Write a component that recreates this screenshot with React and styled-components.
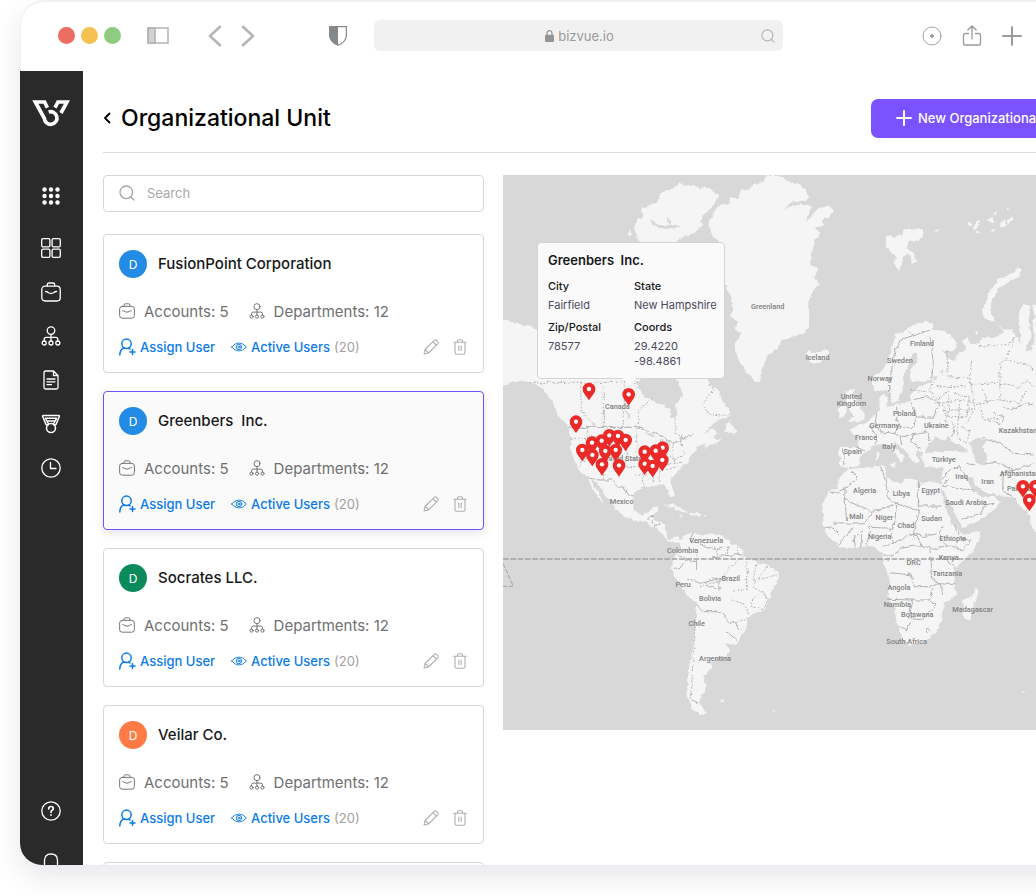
import React from 'react';
import styled, { createGlobalStyle } from 'styled-components';

const GlobalStyle = createGlobalStyle`
  * {
    box-sizing: border-box;
  }

  body {
    margin: 0;
    background: #ffffff;
    color: #17181a;
    font-family: Inter, 'Liberation Sans', sans-serif;
    overflow: hidden;
  }

  button {
    border: 0;
    padding: 0;
    background: none;
    color: inherit;
    font: inherit;
    cursor: pointer;
  }

  svg {
    display: block;
    flex: none;
  }
`;

// Styled Components
// The window runs past the right side of the page
const Window = styled.div`
  display: flex;
  flex-direction: column;
  height: calc(100vh - 31px);
  margin: 0 -88px 31px 20px;
  background: #ffffff;
  border-radius: 24px 0 0 22px;
  box-shadow: 0 12px 28px rgba(30, 30, 60, 0.1);
`;

const Toolbar = styled.div`
  display: flex;
  align-items: center;
  flex: none;
  height: 71px;
  padding: 0 0 2px 37px;
  border: solid #f1f1f1;
  border-width: 2px 0 0 1px;
  border-radius: 24px 0 0 0;
  color: #b5b5b5;
`;

const Dots = styled.div`
  display: flex;
  gap: 6px;
  margin-right: 26px;
`;

const Dot = styled.span`
  width: 17px;
  height: 17px;
  border-radius: 50%;
  background: ${({ $color }) => $color};
`;

const Arrows = styled.div`
  display: flex;
  gap: 19px;
  margin: 0 74px 0 39px;
`;

const AddressBar = styled.div`
  display: flex;
  align-items: center;
  flex: 0 1 409px;
  height: 31px;
  margin-left: 27px;
  padding: 0 8px;
  border-radius: 6px;
  background: #f1f1f1;
`;

const Address = styled.span`
  display: flex;
  align-items: center;
  justify-content: center;
  flex: 1;
  gap: 4px;
  padding-left: 16px;
  color: #9a9a9a;
  font-size: 13px;
`;

const ToolbarActions = styled.div`
  display: flex;
  align-items: center;
  gap: 20px;
  margin-left: 139px;
  color: #9b9b9b;
`;

const Body = styled.div`
  display: flex;
  flex: 1;
  min-height: 0;
  overflow: hidden;
  border-radius: 0 0 0 22px;
`;

const Sidebar = styled.nav`
  display: flex;
  flex-direction: column;
  align-items: center;
  flex: none;
  width: 63px;
  padding: 28px 2px 0 0;
  background: #2a2a2a;
  color: #ffffff;
`;

const SideButton = styled.button`
  display: flex;
  align-items: center;
  justify-content: center;
  flex: none;
  width: 44px;
  height: 44px;
`;

const NavGroup = styled.div`
  margin-top: 47px;

  button:first-child {
    margin-bottom: 8px;
  }
`;

const BottomGroup = styled(NavGroup)`
  margin-top: auto;
  margin-bottom: -20px;
`;

const Main = styled.main`
  flex: 1;
  min-width: 0;
  padding: 28px 20px 0;
`;

const Header = styled.header`
  display: flex;
  align-items: center;
  justify-content: space-between;
  padding-bottom: 14px;
  border-bottom: 1px solid #dcdcdc;
`;

const Heading = styled.div`
  display: flex;
  align-items: center;
  gap: 10px;
  padding-bottom: 2px;
  color: #000000;

  h1 {
    margin: 0;
    font-size: 23px;
    font-weight: 500;
    line-height: 28px;
  }
`;

const PrimaryButton = styled.button`
  display: flex;
  align-items: center;
  gap: 6px;
  height: 39px;
  padding: 0 36px 1px 25px;
  border-radius: 7px;
  background: #7a52ff;
  color: #ffffff;
  font-size: 13px;
  font-weight: 500;
  white-space: nowrap;
`;

const Content = styled.div`
  display: flex;
  align-items: flex-start;
  gap: 19px;
  padding-top: 22px;
`;

const List = styled.section`
  display: flex;
  flex-direction: column;
  flex: none;
  gap: 18px;
  width: 381px;
`;

const SearchBox = styled.label`
  display: flex;
  align-items: center;
  gap: 12px;
  height: 37px;
  margin-bottom: 4px;
  padding: 0 15px 1px;
  border: 1px solid #d6d6d6;
  border-radius: 4px;
  color: #a3a3a3;

  input {
    flex: 1;
    min-width: 0;
    padding: 0;
    border: 0;
    outline: 0;
    background: none;
    font: 13px Inter, 'Liberation Sans', sans-serif;
  }

  input::placeholder {
    color: #a8a8a8;
  }
`;

const Card = styled.article`
  padding: 15px;
  border: 1px solid ${({ $active }) => ($active ? '#6f52f0' : '#d6d6d6')};
  border-radius: 4px;
  background: ${({ $active }) => ($active ? '#fafafa' : '#ffffff')};
  box-shadow: ${({ $active }) => ($active ? '0 3px 10px rgba(90, 90, 130, 0.16)' : 'none')};
`;

const CardTitle = styled.div`
  display: flex;
  align-items: center;
  gap: 11px;
  margin-bottom: 23px;

  h2 {
    margin: 0;
    font-size: 15px;
    font-weight: 500;
    line-height: 18px;
    white-space: pre;
  }
`;

const Avatar = styled.span`
  display: flex;
  align-items: center;
  justify-content: center;
  width: 28px;
  height: 28px;
  border-radius: 50%;
  background: ${({ $color }) => $color};
  color: #ffffff;
  font-size: 12px;
`;

const Stats = styled.div`
  display: flex;
  align-items: center;
  gap: 20px;
  height: 20px;
  margin-bottom: 16px;
  color: #707070;
  font-size: 15px;
`;

const Stat = styled.span`
  display: flex;
  align-items: center;
  gap: 9px;
`;

const Actions = styled.div`
  display: flex;
  align-items: center;
  height: 20px;
  gap: 16px;
  font-size: 13px;
`;

const ActionLink = styled.a`
  display: flex;
  align-items: center;
  gap: 4px;
  color: #0a7be6;
  font-weight: 500;
  text-decoration: none;

  span {
    color: #a0a0a0;
    font-weight: 400;
  }
`;

const CardTools = styled.div`
  display: flex;
  gap: 14px;
  margin-left: auto;
  padding-right: 1px;
  color: #b0b0b0;
`;

const MapPanel = styled.section`
  position: relative;
  flex: 1;
  min-width: 0;
  overflow: hidden;
  background: #d8d8d8;
`;

const MapLabel = styled.text`
  fill: #808080;
  font-family: Roboto, sans-serif;
  font-size: 22px;
  font-weight: 500;
`;

const MapTooltip = styled.div`
  position: absolute;
  top: 67px;
  left: 34px;
  width: 188px;
  padding: 9px 0 9px 10px;
  border: 1px solid #d4d4d4;
  border-radius: 4px;
  background: #fafafa;

  h3 {
    margin: 0 0 9px;
    font-size: 13px;
    font-weight: 600;
    line-height: 16px;
    white-space: pre;
  }

  &::after {
    content: '';
    position: absolute;
    bottom: -5px;
    left: 86px;
    width: 10px;
    height: 10px;
    background: #fafafa;
    transform: rotate(45deg);
  }
`;

const Details = styled.dl`
  display: grid;
  grid-template-columns: 86px 1fr;
  row-gap: 5px;
  margin: 0;
  font-size: 11px;
  white-space: nowrap;

  dt {
    margin-bottom: 3px;
    font-weight: 500;
    line-height: 18px;
  }

  dd {
    margin: 0;
    color: #4b4b5c;
    line-height: 15px;
  }
`;

const Icon = ({ w = 20, h = w, box, sw = 1.3, children }) => (
  <svg
    width={w}
    height={h}
    viewBox={box || `0 0 ${w} ${h}`}
    fill="none"
    stroke="currentColor"
    strokeWidth={sw}
    strokeLinecap="round"
    strokeLinejoin="round"
    aria-hidden="true"
  >
    {children}
  </svg>
);

const Logo = () => (
  <svg width="38" height="28" viewBox="97 298 114 84" fill="none" stroke="#ffffff" strokeWidth="11" aria-hidden="true">
    <path d="M143 324 135 307H107L134 356A19 19 0 1 0 147 337" />
    <path d="M166 324 175 307H202L184 340" />
  </svg>
);

const SearchIcon = ({ size = 16 }) => (
  <Icon w={size} box="0 0 16 16">
    <circle cx="7.3" cy="7.3" r="6.3" />
    <path d="m12 12 3 3" />
  </Icon>
);

const BriefcaseIcon = ({ size = 20, sw }) => (
  <Icon w={size} box="0 0 20 20" sw={sw}>
    <rect x="0.8" y="4.2" width="18.4" height="14.8" rx="3.2" />
    <path d="M6.3 4V2.6Q6.3 1 8 1h4q1.7 0 1.7 1.6V4M4.5 9.5q1.5 0 3 1.3 2.5 1.4 5 0 1.5-1.3 3-1.3" />
  </Icon>
);

const OrgIcon = ({ size = 20, sw }) => (
  <Icon w={size} box="0 0 20 20" sw={sw}>
    <circle cx="10" cy="4.6" r="3.8" />
    <path d="M10 8.4v7M3.2 15v-1.600q0-2 2-2h9.600q2 0 2 2V15" />
    <circle cx="3.2" cy="17" r="2" />
    <circle cx="10" cy="17" r="2" />
    <circle cx="16.8" cy="17" r="2" />
  </Icon>
);

const DotsIcon = () => (
  <svg width="20" height="20" viewBox="0 0 20 20" fill="currentColor" aria-hidden="true">
    {[3.5, 10, 16.5].map((y) => [3.5, 10, 16.5].map((x) => <circle key={`${x}-${y}`} cx={x} cy={y} r="2.2" />))}
  </svg>
);

const TilesIcon = () => (
  <Icon>
    <rect x="0.7" y="0.7" width="8.2" height="8.2" rx="1.3" />
    <rect x="11.1" y="0.7" width="8.2" height="8.2" rx="1.3" />
    <rect x="0.7" y="11.1" width="8.2" height="8.2" rx="1.3" />
    <rect x="11.1" y="11.1" width="8.2" height="8.2" rx="1.3" />
  </Icon>
);

const DocumentIcon = () => (
  <Icon>
    <path d="M12.5 1H4.500q-1.500 0-1.500 1.500v15q0 1.500 1.500 1.500h11q1.500 0 1.500-1.500V5.500L12.500 1v4.500H17M6 9h8M6 11.800h8M6 14.600h4.500" />
  </Icon>
);

const MedalIcon = () => (
  <Icon sw={1.5}>
    <path d="M2.3 1.500h15.400q1 0 .6 1L15 10.500 13 11M2.300 1.500q-1 0-.6 1L5 10.500l2 .5M4.500 4.300h11M4.500 4.300 7.500 10M15.500 4.300 12.500 10M7 7h6" />
    <circle cx="10" cy="14" r="4.5" />
  </Icon>
);

const ClockIcon = () => (
  <Icon>
    <circle cx="10" cy="10" r="9.2" />
    <path d="M9.5 4.500v6h5.500" />
  </Icon>
);

const HelpIcon = () => (
  <Icon>
    <circle cx="10" cy="10" r="9.2" />
    <path d="M7.7 7.800q0-2.300 2.300-2.300t2.300 2q0 1.200-1.200 1.800T10 11.300M10 13.800v.3" strokeWidth="1.7" />
  </Icon>
);

const BellIcon = () => (
  <Icon>
    <path d="M3.5 16V7.500q0-6.500 6.500-6.500t6.500 6.500V16zM8 18.500h4" />
  </Icon>
);

const AssignIcon = () => (
  <Icon w={17} h={18} sw={1.5}>
    <circle cx="7.5" cy="5.8" r="4.7" />
    <path d="M.8 17q.2-6 4.700-7.200M9.500 10.200l1.500.8M13.500 11.500v5M11 14h5" />
  </Icon>
);

const EyeIcon = () => (
  <Icon w={16} h={12} sw={0.9}>
    <path d="M.6 6Q4 2 8 2T15.400 6Q12 10 8 10T.6 6z" />
    <circle cx="8" cy="6" r="2.700" />
    <circle cx="8" cy="6" r="1" />
  </Icon>
);

const PencilIcon = () => (
  <Icon w={16} sw={1.1}>
    <path d="m1 15 1-4.500L11.300 1.300q1.200-1 2.500.3l.7.7q1.200 1.300.2 2.500L5.500 14 1 15zM10 2.800 13.300 6M2 10.500 5.500 14" />
  </Icon>
);

const TrashIcon = () => (
  <Icon w={14} h={16} sw={1.1}>
    <path d="M.7 3.200h12.600M2 3.400v10.300q0 1.500 1.500 1.500h7q1.500 0 1.500-1.500V3.400M4.500 3V2q0-1.200 1.200-1.200h2.600Q9.500.8 9.500 2v1M5.800 7v4.500M8.200 7v4.500" />
  </Icon>
);

const land = [
  // North America
  'M0 450 30 455 50 462 80 465 112 478 130 500 420 500 420 622 412 650 430 675 455 690 490 705 510 715 512 738 522 748 532 735 528 705 545 680 548 665 538 645 530 626 560 600 600 600 630 640 640 655 652 655 658 675 672 695 690 722 692 742 660 748 640 762 615 785 640 778 655 790 640 802 665 812 640 822 612 838 615 822 592 830 588 845 570 860 562 875 548 892 535 905 513 926 512 940 522 966 518 982 510 982 500 955 492 943 465 945 450 950 425 950 402 970 400 1010 412 1030 432 1033 445 1025 450 1015 472 1013 465 1035 464 1052 494 1058 497 1085 503 1103 520 1106 535 1098 545 1110 532 1120 505 1110 480 1088 466 1072 440 1060 420 1052 400 1052 370 1038 345 1018 342 1000 320 980 300 957 288 937 276 930 292 965 312 998 305 998 282 962 266 930 262 924 236 900 222 870 212 840 214 812 210 782 198 758 172 735 158 695 140 672 120 650 100 640 60 632 30 640 0 655Z',
  'M672 782 680 758 692 752 700 772 712 782 705 794 690 788Z',
  'M440 110 470 95 485 70 510 60 540 40 590 50 630 55 655 80 640 100 625 122 600 150 610 165 580 190 540 205 520 222 430 222 410 200 405 170 415 150 430 140 425 115Z',
  'M380 188 392 180 390 200Z',
  // Greenland and Ellesmere
  'M625 165 640 130 660 105 688 100 690 82 715 84 722 62 745 60 760 42 790 35 800 15 830 15 870 35 900 42 915 58 925 85 910 92 870 98 852 115 895 104 932 105 930 125 918 156 945 125 960 113 985 108 1002 125 985 140 968 152 970 168 945 172 958 192 945 212 936 250 932 285 955 297 943 320 956 345 935 370 925 400 928 440 930 462 918 483 885 500 850 510 828 540 803 555 790 590 780 636 765 632 740 610 718 575 705 540 710 510 725 492 700 475 715 455 690 440 700 420 690 375 675 345 665 218 640 200Z',
  'M916 548 930 540 935 550 960 545 985 540 988 555 960 578 940 582 925 572 930 562Z',
  // Svalbard and the Arctic islands
  'M1158 200 1172 195 1183 208 1195 190 1205 200 1212 178 1225 172 1240 180 1268 178 1272 195 1255 215 1225 215 1220 235 1235 242 1250 275 1240 282 1225 252 1210 262 1200 305 1190 290 1180 275 1190 262 1175 250 1158 225Z',
  'M1303 182 1312 176 1316 182 1308 187Z',
  'M1404 165 1412 155 1418 162 1410 170ZM1420 162 1440 152 1436 168 1420 178ZM1464 148 1478 140 1488 155 1476 160ZM1502 165 1515 150 1517 170 1503 172ZM1520 155 1538 138 1540 150 1526 160ZM1475 172 1486 178 1474 184ZM1430 182 1442 186 1432 190ZM1482 128 1490 122 1490 134ZM1518 112 1530 116 1520 120Z',
  'M1448 430 1455 395 1470 355 1495 330 1530 312 1552 295 1565 300 1560 315 1520 340 1495 358 1480 385 1472 425 1485 455 1465 450 1445 440Z',
  'M1420 488 1426 482 1434 487 1426 496Z',
  // British Isles
  'M1038 668 1048 658 1062 658 1060 680 1080 705 1095 735 1092 750 1045 757 1060 738 1048 718 1040 690Z',
  'M1014 712 1035 708 1040 732 1018 745Z',
  // Eurasia
  'M1048 782 1072 765 1100 760 1120 735 1143 722 1140 690 1150 670 1160 685 1160 712 1195 702 1230 695 1240 665 1262 648 1290 640 1308 628 1235 638 1232 605 1252 572 1250 550 1240 548 1224 588 1210 620 1208 660 1195 690 1180 702 1170 685 1165 665 1145 665 1123 662 1116 625 1148 600 1163 570 1173 540 1183 510 1185 492 1215 482 1240 465 1278 450 1298 462 1295 480 1330 482 1360 505 1371 525 1358 545 1325 540 1343 560 1363 572 1378 548 1398 540 1388 515 1400 500 1413 522 1438 520 1448 505 1485 500 1518 490 1492 465 1510 475 1538 480 1548 500 1565 520 1556 465 1558 420 1573 402 1592 408 1586 450 1592 500 1575 545 1596 538 1604 510 1598 470 1604 440 1598 405 1640 400 1900 480 1900 1100 1640 1110 1620 1120 1598 1070 1583 1025 1558 1005 1548 985 1498 975 1458 970 1433 950 1408 920 1398 925 1418 960 1448 982 1478 980 1503 995 1488 1015 1438 1050 1388 1075 1368 1035 1343 990 1323 940 1328 892 1278 892 1265 862 1262 845 1243 842 1258 872 1238 880 1222 850 1200 828 1182 815 1185 830 1213 858 1205 878 1188 852 1165 828 1140 820 1115 835 1090 850 1075 885 1040 893 1018 882 1018 830 1070 832 1078 810 1068 797Z',
  'M1130 848 1138 846 1138 868 1130 868ZM1165 882 1190 878 1186 890Z',
  // Africa
  'M1043 897 1090 893 1140 888 1155 890 1158 922 1180 930 1205 945 1215 925 1240 925 1260 938 1300 936 1328 945 1325 970 1345 1040 1358 1065 1385 1090 1395 1095 1440 1085 1438 1110 1410 1150 1370 1195 1358 1215 1365 1245 1368 1275 1335 1300 1330 1335 1310 1380 1275 1415 1225 1425 1212 1415 1190 1360 1185 1320 1165 1285 1170 1240 1165 1205 1150 1180 1148 1150 1125 1135 1105 1130 1080 1130 1040 1135 1020 1130 985 1100 965 1065 970 1040 965 1010 985 965 1010 955 1020 920Z',
  'M1428 1252 1436 1275 1420 1310 1408 1350 1392 1345 1390 1290 1412 1278Z',
  // Caribbean
  'M492 1004 515 1002 545 1016 568 1028 545 1026 520 1012ZM568 1030 590 1026 604 1034 575 1038ZM534 1036 548 1038 540 1041ZM612 1034 624 1035 614 1038Z',
  // South America
  'M540 1115 550 1097 578 1085 590 1094 620 1092 665 1096 700 1125 720 1130 735 1160 765 1175 803 1187 835 1205 838 1225 815 1260 803 1300 795 1320 760 1332 742 1350 740 1370 722 1400 705 1427 675 1418 690 1440 680 1455 640 1470 625 1480 635 1490 610 1520 620 1545 605 1580 600 1600 620 1630 600 1635 575 1610 560 1575 562 1520 575 1450 588 1360 590 1295 560 1275 530 1225 512 1195 525 1160 540 1140Z',
  'M656 1590 676 1588 670 1594ZM820 1618 832 1626 822 1622ZM1564 1562 1574 1566 1566 1568Z',
];

const water = [
  // Great Lakes
  'M430 790 455 792 470 800 450 802ZM478 806 486 808 480 832 474 825ZM490 802 512 810 505 828 498 815Z',
  // Black Sea and Caspian Sea
  'M1285 818 1308 802 1335 812 1345 800 1358 815 1395 832 1402 848 1340 842 1275 850Z',
  'M1405 818 1430 803 1462 808 1446 832 1462 850 1456 885 1432 886 1424 850Z',
  // Lakes and fjords
  'M1298 620 1312 618 1308 632ZM1322 600 1332 600 1330 616ZM1290 1160 1300 1162 1296 1176Z',
  'M448 145 475 165 540 168 542 174 475 178 458 165ZM505 140 512 165 500 160ZM372 705 380 720 392 745 384 748Z',
];

const solidBorders = [
  'M205 772H410L450 785 490 800 520 820 560 800 580 792',
  'M262 924 300 930 335 930 355 950 372 952 385 975 402 978',
  'M440 1050 450 1040 462 1040 458 1062M462 1068 480 1062 494 1058',
  'M535 1155 560 1170 590 1175 590 1200M520 1190 535 1200 560 1170M565 1225 600 1240 660 1225 660 1260 625 1250M590 1300 610 1325 660 1325 690 1360 700 1350 720 1380M680 1385 710 1410M575 1590 600 1600',
  'M580 1085 570 1110 610 1125 640 1140 670 1130M640 1160 700 1155 730 1155M690 1125 672 1160',
  'M1045 895 1075 925 1035 955 1010 967H990M1035 955V985L1115 1028 1190 1000 1165 985 1155 925 1142 890M1115 1028 1090 1058 1040 1060M1035 985 1040 1058 1000 1060M1190 1000 1255 1022V935M1255 1008H1325M1255 1022 1240 1090 1180 1120M1190 1000 1182 1075 1110 1072 1100 1130M1240 1090 1265 1125 1200 1135 1160 1175M1265 1125 1300 1138 1340 1128 1390 1140 1415 1110 1380 1100 1360 1065M1340 1128 1318 1090 1330 1065M1240 1090 1270 1100 1310 1092M1290 1138 1295 1190 1290 1225 1320 1238 1368 1242M1340 1170 1368 1195M1170 1208 1235 1215 1240 1250 1285 1250 1320 1238 1328 1275M1165 1288 1240 1290 1285 1290 1300 1255M1240 1290 1225 1345 1270 1350 1310 1300 1285 1290M1197 1370 1220 1380 1232 1355M1275 1380 1285 1374 1290 1384 1280 1392Z',
  'M1018 1125 1035 1100 1060 1075M1062 1132 1060 1100 1090 1085M1082 1130 1085 1095M965 1070 1000 1075 1020 1095M1150 1155H1185M1150 1130 1180 1120 1172 1075',
  'M1326 925 1350 900 1380 890 1400 925M1345 925 1330 945 1385 960 1420 962M1385 1048 1440 1035 1455 1005 1480 1000M1400 880 1425 888M1500 920 1515 900 1545 905M1455 880 1490 878 1540 900 1600 880M1510 910 1508 960 1545 985M1445 800 1500 820 1540 850 1600 855',
  'M1170 690 1168 640 1175 600 1185 540 1210 505 1250 495 1290 480M1225 485 1240 500M1290 500 1300 580 1295 625',
  'M1130 730 1125 760 1140 785 1180 790 1200 770 1190 745 1190 710M1105 765 1130 795 1125 825M1200 770 1240 775 1250 740 1230 700M1180 790 1210 800 1240 790 1280 785 1290 810M1200 800 1205 825M1240 790 1235 815 1262 835M1250 740 1300 745 1320 700 1280 680 1240 690M1030 838 1035 885M1070 832 1095 842',
  'M1510 710 1530 720 1580 700 1600 705M1350 755 1365 770 1355 800M1480 730 1515 740 1500 760 1460 752',
];

const dashedBorders = [
  'M90 637H415M243 637V720L290 772M310 637V772M370 637V772M415 772V720L460 685M525 748V790L560 810M628 640 640 660 610 700 625 730 690 738',
  'M212 805H260M263 772V850L240 890M263 800H410M310 800V930M345 800V850M310 870H430M380 800V870M360 870V925M410 772V850M430 870V950M380 890H430M405 915H440M460 890V945M480 880V940M440 880H550M500 850 520 870 560 850M540 800 550 850M520 820V880M500 900 530 890',
  'M600 1250 660 1230 680 1200 730 1160M740 1175V1260H700M770 1180 760 1250 790 1270M800 1190 775 1230 830 1215M755 1290 790 1265 805 1290 790 1320 755 1310ZM690 1290 730 1300 745 1330M690 1360 740 1345M585 1370 580 1450 575 1550 570 1590M590 1150V1175M645 1130 650 1165M710 1130 715 1155',
  'M1340 545 1345 620 1410 625 1425 720 1400 760M1415 572 1410 625M1440 527H1520L1545 500 1520 565 1500 580 1500 690M1520 570 1570 580 1600 600M1410 640 1500 640 1560 650 1580 630 1600 650M1310 650 1400 650M1300 700 1380 690 1430 700 1500 690 1560 700 1575 660M1290 660 1310 690 1350 660 1340 740 1400 740 1410 680 1360 670M1380 690 1370 800 1400 820 1410 780 1380 770M1440 700 1450 750 1500 745M1450 660 1460 700M1230 660 1280 665 1300 640M1350 720 1420 720M1330 700 1340 760',
];

// [x, y, name, anchor]
const labels = [
  [803, 418, 'Greenland'],
  [352, 717, 'Canada'],
  [372, 872, 'United States'],
  [365, 1002, 'Mexico'],
  [619, 1118, 'Venezuela'],
  [548, 1148, 'Colombia'],
  [692, 1234, 'Brazil'],
  [549, 1251, 'Peru'],
  [630, 1293, 'Bolivia'],
  [590, 1369, 'Chile'],
  [645, 1473, 'Argentina'],
  [953, 571, 'Iceland'],
  [1266, 527, 'Finland'],
  [1200, 579, 'Sweden'],
  [1140, 633, 'Norway'],
  [1054, 687, 'United'],
  [1054, 709, 'Kingdom'],
  [1213, 737, 'Poland'],
  [1153, 773, 'Germany'],
  [1309, 773, 'Ukraine'],
  [1098, 810, 'France'],
  [1496, 788, 'Kazakhstan', 'start'],
  [1167, 837, 'Italy'],
  [1058, 852, 'Spain'],
  [1331, 877, 'Türkiye'],
  [1385, 928, 'Iraq'],
  [1463, 941, 'Iran'],
  [1499, 918, 'Afghanistan', 'start'],
  [1521, 962, 'Pakistan', 'start'],
  [1094, 968, 'Algeria'],
  [1204, 977, 'Libya'],
  [1292, 968, 'Egypt'],
  [1398, 1004, 'Saudi Arabia'],
  [1069, 1046, 'Mali'],
  [1153, 1049, 'Niger'],
  [1218, 1075, 'Chad'],
  [1295, 1053, 'Sudan'],
  [1139, 1107, 'Nigeria'],
  [1358, 1112, 'Ethiopia'],
  [1241, 1186, 'DRC'],
  [1346, 1171, 'Kenya'],
  [1342, 1218, 'Tanzania'],
  [1197, 1260, 'Angola'],
  [1192, 1312, 'Namibia'],
  [1252, 1340, 'Botswana'],
  [1418, 1326, 'Madagascar'],
  [1220, 1423, 'South Africa'],
];

const pins = [
  [267, 657], [386, 673], [228, 755], [328, 796], [354, 798], [377, 810],
  [305, 812], [276, 818], [488, 833], [247, 840], [347, 840], [467, 842],
  [316, 843], [434, 845], [277, 855], [487, 870], [434, 881], [306, 883],
  [357, 886], [458, 888], [1569, 949], [1606, 949], [1588, 990],
];

const WorldMap = () => (
  <svg width="100%" height="555" role="img" aria-label="World map">
    <defs>
      <filter id="coast" x="0" y="0" width="100%" height="100%">
        <feTurbulence type="fractalNoise" baseFrequency="0.16" numOctaves="3" seed="4" />
        <feDisplacementMap in="SourceGraphic" scale="5" xChannelSelector="R" yChannelSelector="G" />
      </filter>
    </defs>
    <g filter="url(#coast)">
      <g transform="scale(0.33333) translate(-9 -15)" strokeLinejoin="round">
        <path d={land.join('')} fill="#f5f5f5" />
        <path d={water.join('')} fill="#d8d8d8" />
        <path d={solidBorders.join('')} fill="none" stroke="#a6a6a6" strokeWidth="2.6" />
        <path d={dashedBorders.join('')} fill="none" stroke="#a8a8a8" strokeWidth="2.6" strokeDasharray="6 4" />
      </g>
    </g>
    <g transform="scale(0.33333) translate(-9 -15)">
      <path d="M9 1167H1900" stroke="#a3a3a3" strokeWidth="5" strokeDasharray="17 5" />
      <path d="M9 1180 40 1249H9" fill="none" stroke="#a3a3a3" strokeWidth="3" strokeDasharray="14 5" />
      {labels.map(([x, y, name, anchor = 'middle']) => (
        <MapLabel key={name} x={x} y={y} textAnchor={anchor}>
          {name}
        </MapLabel>
      ))}
      {pins.map(([x, y]) => (
        <g key={`${x}-${y}`} transform={`translate(${x} ${y})`}>
          <path d="M-19 0a19 19 0 0 1 38 0c0 11-10 20-19 34-9-14-19-23-19-34z" fill="#ea2a28" />
          <circle r="6.5" fill="#ffffff" />
        </g>
      ))}
    </g>
  </svg>
);

const units = [
  { name: 'FusionPoint Corporation', color: '#228be6' },
  { name: 'Greenbers  Inc.', color: '#228be6', active: true },
  { name: 'Socrates LLC.', color: '#0b8a5c' },
  { name: 'Veilar Co.', color: '#ff7a45' },
];

const UnitCard = ({ name, color, active }) => (
  <Card $active={active}>
    <CardTitle>
      <Avatar $color={color}>D</Avatar>
      <h2>{name}</h2>
    </CardTitle>
    <Stats>
      <Stat>
        <BriefcaseIcon size={16} sw={1.2} />
        Accounts: 5
      </Stat>
      <Stat>
        <OrgIcon size={16} sw={1.2} />
        Departments: 12
      </Stat>
    </Stats>
    <Actions>
      <ActionLink href="#assign">
        <AssignIcon />
        Assign User
      </ActionLink>
      <ActionLink href="#users">
        <EyeIcon />
        Active Users <span>(20)</span>
      </ActionLink>
      <CardTools>
        <button type="button" aria-label="Edit">
          <PencilIcon />
        </button>
        <button type="button" aria-label="Delete">
          <TrashIcon />
        </button>
      </CardTools>
    </Actions>
  </Card>
);

const BrowserBar = () => (
  <Toolbar>
    <Dots>
      <Dot $color="#ec6d62" />
      <Dot $color="#f4c153" />
      <Dot $color="#8fcb80" />
    </Dots>
    <button type="button" aria-label="Toggle sidebar">
      <svg width="22" height="17" viewBox="0 0 22 17" fill="none" stroke="#b5b5b5" strokeWidth="1.6" aria-hidden="true">
        <path d="M1 1h7v15H1z" fill="#d2d2d2" />
        <path d="M1 1h20v15H1z" />
      </svg>
    </button>
    <Arrows>
      <button type="button" aria-label="Back">
        <Icon w={14} h={22} sw={2.6}>
          <path d="M12 1.800 2 11l10 9.200" />
        </Icon>
      </button>
      <button type="button" aria-label="Forward">
        <Icon w={14} h={22} sw={2.6}>
          <path d="m2 1.800 10 9.200-10 9.200" />
        </Icon>
      </button>
    </Arrows>
    <svg width="18" height="20" viewBox="0 0 18 20" aria-hidden="true">
      <path d="M.6.6h16.800V9q0 7-8.400 10.300Q.6 16 .6 9z" fill="#ffffff" stroke="#84888b" strokeWidth="1.2" />
      <path d="M.6.6H9v18.700Q.6 16 .6 9z" fill="#84888b" />
    </svg>
    <AddressBar>
      <Address>
        <svg width="9" height="12" viewBox="0 0 9 12" aria-hidden="true">
          <rect y="4.8" width="9" height="7.2" rx="1" fill="#949494" />
          <path d="M2 5V3.200q0-2.500 2.500-2.500T7 3.200V5" fill="none" stroke="#949494" strokeWidth="1.2" />
        </svg>
        bizvue.io
      </Address>
      <SearchIcon size={14} />
    </AddressBar>
    <ToolbarActions>
      <button type="button" aria-label="Privacy">
        <Icon sw={0.9}>
          <circle cx="10" cy="10" r="9" />
          <circle cx="10" cy="10" r="1.5" fill="currentColor" />
        </Icon>
      </button>
      <button type="button" aria-label="Share">
        <Icon h={21}>
          <path d="M6.5 8.500h-3q-2 0-2 2V18q0 2 2 2h13q2 0 2-2v-7.500q0-2-2-2h-3M10 14V1M5.800 5 10 1l4.200 4" />
        </Icon>
      </button>
      <button type="button" aria-label="New tab">
        <Icon sw={2}>
          <path d="M10 1v18M1 10h18" />
        </Icon>
      </button>
    </ToolbarActions>
  </Toolbar>
);

const SideNav = () => (
  <Sidebar>
    <Logo />
    <NavGroup>
      <SideButton aria-label="Apps"><DotsIcon /></SideButton>
      <SideButton aria-label="Dashboard"><TilesIcon /></SideButton>
      <SideButton aria-label="Accounts"><BriefcaseIcon /></SideButton>
      <SideButton aria-label="Departments"><OrgIcon /></SideButton>
      <SideButton aria-label="Documents"><DocumentIcon /></SideButton>
      <SideButton aria-label="Awards"><MedalIcon /></SideButton>
      <SideButton aria-label="History"><ClockIcon /></SideButton>
    </NavGroup>
    <BottomGroup>
      <SideButton aria-label="Help"><HelpIcon /></SideButton>
      <SideButton aria-label="Notifications"><BellIcon /></SideButton>
    </BottomGroup>
  </Sidebar>
);

const App = () => {
  return (
    <>
      <GlobalStyle />
      <Window>
        <BrowserBar />
        <Body>
          <SideNav />
          <Main>
            <Header>
              <Heading>
                <button type="button" aria-label="Go back">
                  <Icon w={8} h={12} sw={1.8}>
                    <path d="M6.5 1.500 2 6l4.500 4.500" />
                  </Icon>
                </button>
                <h1>Organizational Unit</h1>
              </Heading>
              <PrimaryButton type="button">
                <Icon w={16} sw={2}>
                  <path d="M8 1v14M1 8h14" />
                </Icon>
                New Organizational Unit
              </PrimaryButton>
            </Header>
            <Content>
              <List>
                <SearchBox>
                  <SearchIcon />
                  <input type="search" placeholder="Search" aria-label="Search" />
                </SearchBox>
                {units.map((unit) => (
                  <UnitCard key={unit.name} {...unit} />
                ))}
                {/* Next card, not loaded yet */}
                <Card aria-hidden="true" />
              </List>
              <MapPanel>
                <WorldMap />
                <MapTooltip>
                  <h3>{'Greenbers  Inc.'}</h3>
                  <Details>
                    <div>
                      <dt>City</dt>
                      <dd>Fairfield</dd>
                    </div>
                    <div>
                      <dt>State</dt>
                      <dd>New Hampshire</dd>
                    </div>
                    <div>
                      <dt>Zip/Postal</dt>
                      <dd>78577</dd>
                    </div>
                    <div>
                      <dt>Coords</dt>
                      <dd>29.4220</dd>
                      <dd>-98.4861</dd>
                    </div>
                  </Details>
                </MapTooltip>
              </MapPanel>
            </Content>
          </Main>
        </Body>
      </Window>
    </>
  );
};

export default App;
